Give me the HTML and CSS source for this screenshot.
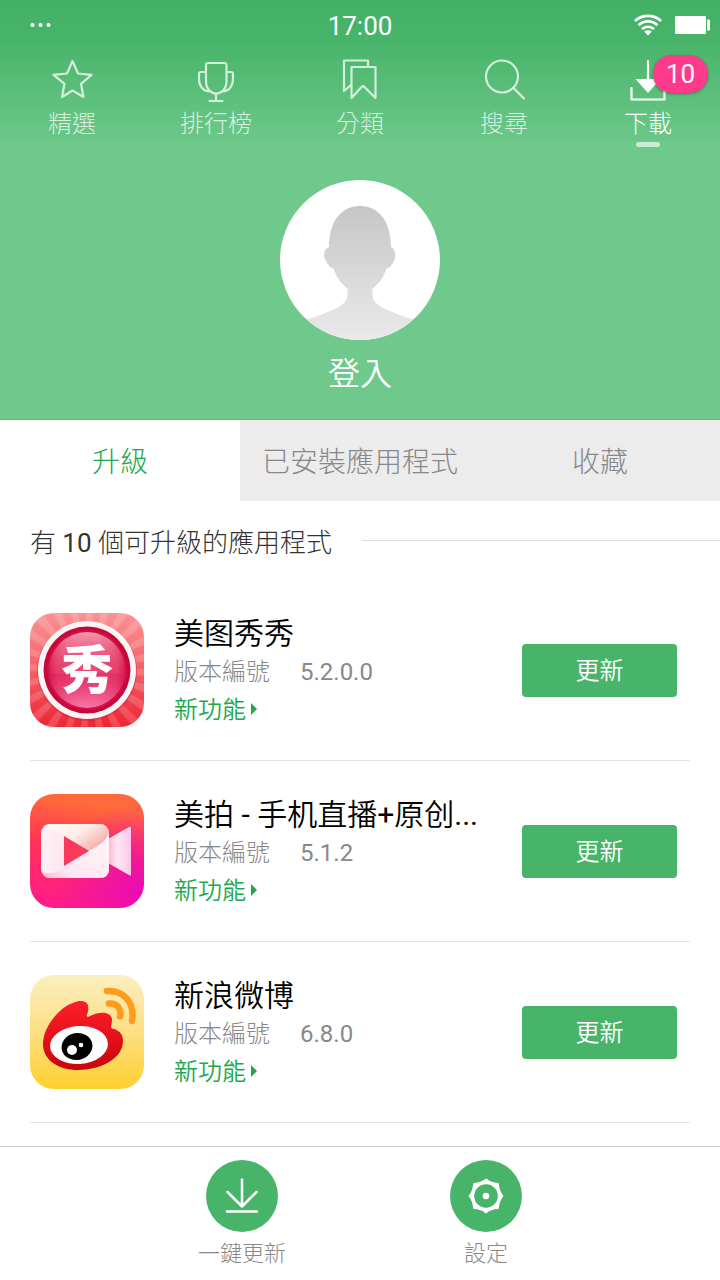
FILE: index.html
```html
<!DOCTYPE html>
<html lang="zh-Hant">
<head>
<meta charset="utf-8">
<meta name="viewport" content="width=device-width, initial-scale=1">
<title>下載</title>
<link rel="stylesheet" href="styles.css">
</head>
<body>
<div class="app">
  <header class="top">
    <div class="status">
      <svg class="status-dots" width="22" height="6" viewBox="0 0 22 6" fill="#fff"><circle cx="2.500" cy="3" r="2.100"/><circle cx="10.500" cy="3" r="2.100"/><circle cx="18.500" cy="3" r="2.100"/></svg>
      <time class="clock">17:00</time>
      <div class="status-right">
        <svg width="28" height="22" viewBox="0 0 28 22" fill="none" stroke="#fff" stroke-width="2.600"><path d="M1 7a19 19 0 0 1 26 0M4.600 11.200a13.500 13.500 0 0 1 18.800 0M8 15.200a8.500 8.500 0 0 1 12 0"/><path d="M10.200 17.500q3.800-2.600 7.600 0L14 21.500z" fill="#fff" stroke="none"/></svg>
        <svg width="35" height="18" viewBox="0 0 35 18" fill="#fff"><rect width="31" height="18" rx="1"/><rect x="32" y="3.500" width="3" height="11" rx="1"/></svg>
      </div>
    </div>
    <nav class="nav">
      <a class="nav-item" href="#">
        <svg width="44" height="44" viewBox="0 0 44 44"><path d="M22.500 4l5.500 12.500 13.500 1.300-10.500 9L33.500 40 22.500 33.500 12 40l2.500-13.200L3.500 17.800l13.500-1.300z"/></svg>
        <span>精選</span>
      </a>
      <a class="nav-item" href="#">
        <svg width="44" height="44" viewBox="0 0 44 44"><path d="M12 8q0-2 2-2h16.500q2 0 2 2v16c0 8-5 12.500-10.300 12.500S12 32 12 24zM12 15H7q-2 0-2 2v5c0 7 4 12 9.500 12.500M32.500 15H37q2 0 2 2v5c0 7-4 12-9.500 12.500M22 37v7M15.500 44h13"/></svg>
        <span>排行榜</span>
      </a>
      <a class="nav-item" href="#">
        <svg width="44" height="44" viewBox="0 0 44 44"><path d="M13.500 10h24v31L26.500 30q-1.500-1.500-3 0l-10 11zM13.500 27.500L6 34V3.500h24V10"/></svg>
        <span>分類</span>
      </a>
      <a class="nav-item" href="#">
        <svg width="44" height="44" viewBox="0 0 44 44"><circle cx="20" cy="19.500" r="16"/><path d="M31.500 31l10.500 10.500"/></svg>
        <span>搜尋</span>
      </a>
      <a class="nav-item active" href="#" aria-current="page">
        <svg width="44" height="44" viewBox="0 0 44 44"><path d="M22 4v20"/><path class="solid" d="M9.500 22h25L22 36z"/><path d="M5.500 31v11.500h33V31"/></svg>
        <span>下載</span>
        <b class="badge">10</b>
      </a>
    </nav>
    <a class="profile" href="#">
      <svg class="avatar" width="160" height="160" viewBox="0 0 160 160">
        <defs>
          <linearGradient id="person" x1="0" y1="0" x2="0" y2="1"><stop offset="0" stop-color="#c6c6c6"/><stop offset="1" stop-color="#ebebeb"/></linearGradient>
          <clipPath id="round"><circle cx="80" cy="80" r="80"/></clipPath>
        </defs>
        <circle cx="80" cy="80" r="80" fill="#fff"/>
        <path clip-path="url(#round)" fill="url(#person)" d="M80 26c20 0 31 17 31 41 5 3 5 9 3 14-2 4-4 7-8 8-2 8-8 16-14 20 1 6 0 10 4 14 11 9 25 12 38 17v24H26v-24c13-5 27-8 38-17 4-4 3-8 4-14-6-4-12-12-14-20-4-1-6-4-8-8-3-5-3-11 3-14 0-24 11-41 31-41z"/>
      </svg>
      <span>登入</span>
    </a>
  </header>

  <div class="tabs" role="tablist">
    <button class="tab selected" role="tab" aria-selected="true">升級</button>
    <button class="tab" role="tab" aria-selected="false">已安裝應用程式</button>
    <button class="tab" role="tab" aria-selected="false">收藏</button>
  </div>

  <main class="content">
    <h1 class="heading"><span>有 <span class="latin">10</span> 個可升級的應用程式</span></h1>
    <ul class="list">
      <li class="row">
        <svg class="app-icon meitu" viewBox="0 0 114 114">
          <defs>
            <radialGradient id="disc" cx=".5" cy=".5" r=".5"><stop offset="0" stop-color="#ee4a7c"/><stop offset=".75" stop-color="#e63a68"/><stop offset="1" stop-color="#c9063c"/></radialGradient>
            <linearGradient id="shine" x1="0" y1="0" x2="0" y2="1"><stop offset="0" stop-color="#f7b0bf" stop-opacity=".85"/><stop offset=".5" stop-color="#ee5a80" stop-opacity=".1"/><stop offset=".56" stop-color="#e11a58" stop-opacity=".4"/><stop offset="1" stop-color="#ff8fc0" stop-opacity=".8"/></linearGradient>
          </defs>
          <circle cx="57" cy="58" r="50" fill="#c92038" opacity=".4"/>
          <circle cx="57" cy="57" r="49" fill="#f8f5f5"/>
          <circle cx="57" cy="57" r="43.500" fill="#c9063c"/>
          <circle cx="57" cy="57" r="41" fill="url(#disc)"/>
          <circle cx="57" cy="57" r="38" fill="url(#shine)"/>
          <text class="logo-char" x="57" y="76" text-anchor="middle">秀</text>
        </svg>
        <div class="info">
          <h2>美图秀秀</h2>
          <p><span>版本編號</span><span class="latin">5.2.0.0</span></p>
          <a class="news" href="#">新功能<svg width="6" height="12" viewBox="0 0 6 12"><path d="M0 0l6 6-6 6z" fill="currentColor"/></svg></a>
        </div>
        <button class="update">更新</button>
      </li>
      <li class="row">
        <svg class="app-icon meipai" viewBox="0 0 114 114">
          <defs>
            <linearGradient id="lens" x1="0" y1="0" x2="1" y2="0"><stop offset="0" stop-color="#f9b8cc"/><stop offset=".4" stop-color="#ffe6f3"/><stop offset="1" stop-color="#fbc5ec"/></linearGradient>
            <linearGradient id="fold" x1="0" y1="0" x2="1" y2=".6"><stop offset="0" stop-color="#fff"/><stop offset=".55" stop-color="#ffece9"/><stop offset="1" stop-color="#f5b0a8"/></linearGradient>
            <linearGradient id="side" x1="0" y1="0" x2="1" y2="0"><stop offset="0" stop-color="#fff0f6"/><stop offset="1" stop-color="#fbd3e4"/></linearGradient>
            <linearGradient id="base" x1="0" y1="1" x2="1" y2="0"><stop offset="0" stop-color="#f5b5cd"/><stop offset=".25" stop-color="#ffe5f3"/><stop offset="1" stop-color="#fff5f8"/></linearGradient>
          </defs>
          <path d="M78 45l21-12q2-1 2 1v46q0 3-2 1L78 69z" fill="url(#lens)"/>
          <rect x="11" y="30" width="68" height="54" rx="9" fill="url(#side)"/>
          <path d="M14 32q3-2 6-2h50q8 0 8 9-2 10-20 18L34 42Q23 35 14 34z" fill="url(#fold)"/>
          <path d="M12 78q12 4 23-5l24-16q18-9 20-17v35q0 9-9 9H20q-6 0-8-6z" fill="url(#base)"/>
          <path d="M34 42l25 15-25 15z" fill="#f83a5c"/>
        </svg>
        <div class="info">
          <h2>美拍<span class="latin"> - </span>手机直播<span class="latin">+</span>原创<span class="latin">...</span></h2>
          <p><span>版本編號</span><span class="latin">5.1.2</span></p>
          <a class="news" href="#">新功能<svg width="6" height="12" viewBox="0 0 6 12"><path d="M0 0l6 6-6 6z" fill="currentColor"/></svg></a>
        </div>
        <button class="update">更新</button>
      </li>
      <li class="row">
        <svg class="app-icon weibo" viewBox="0 0 114 114">
          <defs><linearGradient id="red" x1="0" y1="0" x2="0" y2="1"><stop offset="0" stop-color="#ff1f2c"/><stop offset="1" stop-color="#c9050b"/></linearGradient></defs>
          <path fill="url(#red)" d="M47 26.500c9-2 14 3 10 13q-1 3 2 2c9-5 22-6 23 3q0 3-1 7 0 2 3 2.500c6 2 9 6 9 12 0 18-23 29-45 29-20 0-35-10-35-26 0-18 18-39 34-42.500z"/>
          <ellipse cx="49" cy="70" rx="29" ry="19" fill="#fff" transform="rotate(-4 49 70)"/>
          <ellipse cx="47" cy="71.500" rx="15.500" ry="13.500" fill="#000" transform="rotate(-12 47 71.500)"/>
          <circle cx="42" cy="75" r="5" fill="#fff"/><circle cx="51" cy="70" r="2.300" fill="#fff"/>
          <path d="M77 16c18-1 28 13 25 30M79 28.500c8-1 13 6 11 13" fill="none" stroke="#ff9b1d" stroke-width="6.500" stroke-linecap="round"/>
        </svg>
        <div class="info">
          <h2>新浪微博</h2>
          <p><span>版本編號</span><span class="latin">6.8.0</span></p>
          <a class="news" href="#">新功能<svg width="6" height="12" viewBox="0 0 6 12"><path d="M0 0l6 6-6 6z" fill="currentColor"/></svg></a>
        </div>
        <button class="update">更新</button>
      </li>
    </ul>
  </main>

  <footer class="bottom">
    <button class="action">
      <svg width="72" height="72" viewBox="0 0 72 72"><circle cx="36" cy="36" r="36" fill="#48b46a"/><path d="M36 19.500v27M21.500 32L36 46.500 50.500 32M21 51.500h30" fill="none" stroke="#fff" stroke-width="2.500" stroke-linecap="round" stroke-linejoin="round"/></svg>
      <span>一鍵更新</span>
    </button>
    <button class="action">
      <svg width="72" height="72" viewBox="0 0 72 72"><circle cx="36" cy="36" r="36" fill="#48b46a"/><g transform="translate(36 36)"><path d="M0-16.500Q4.900-12.600 12-12.300 12.600-4.900 16.500 0 12.600 4.900 12 12.300 4.900 12.600 0 16.500-4.900 12.600-12 12.300-12.600 4.900-16.500 0-12.600-4.900-12-12.300-4.900-12.600 0-16.500z" fill="#fff" stroke="#fff" stroke-width="1.600" stroke-linejoin="round"/><circle r="11.800" fill="#48b46a"/><circle r="3.300" fill="#fff"/></g></svg>
      <span>設定</span>
    </button>
  </footer>
</div>
</body>
</html>
```
FILE: styles.css
```css
* { box-sizing: border-box; }

body {
  margin: 0;
  background: #fff;
  font-family: Roboto, "Noto Sans CJK TC", sans-serif;
  font-weight: 300;
}

a { color: inherit; text-decoration: none; }
svg { display: block; flex: none; }

button {
  border: 0;
  padding: 0;
  background: none;
  font: inherit;
  color: inherit;
}

.latin { font-weight: 400; }

.app {
  height: 100vh;
  display: flex;
  flex-direction: column;
}

.top {
  flex: none;
  color: #fff;
  background: linear-gradient(#42b065, #48b46a 40px, #6fc98c 150px);
  border-bottom: 1px solid #58bd78;
}

.status {
  display: grid;
  grid-template-columns: 1fr auto 1fr;
  align-items: center;
  height: 52px;
  padding: 0 10px 2px 30px;
}

.clock {
  margin-right: 20px;
  padding-top: 2px;
  font-size: 26px;
  font-weight: 400;
}

.status-right {
  display: flex;
  justify-content: flex-end;
  align-items: center;
  gap: 13px;
}

.nav { display: grid; grid-template-columns: repeat(5, 1fr); }

.nav-item {
  position: relative;
  display: flex;
  flex-direction: column;
  align-items: center;
  gap: 5px;
  height: 96px;
  padding-top: 5px;
  font-size: 24px;
  line-height: 36px;
  color: rgba(255, 255, 255, .75);
}

.nav-item svg {
  overflow: visible;
  fill: none;
  stroke: currentColor;
  stroke-width: 2.2px;
  stroke-linejoin: round;
  stroke-linecap: round;
}

.nav-item.active { color: #fff; }
.nav-item .solid { fill: currentColor; stroke: none; }

.nav-item.active::after {
  content: "";
  flex: none;
  width: 24px;
  height: 5px;
  margin-top: -5px;
  border-radius: 3px;
  background: rgba(255, 255, 255, .65);
}

.badge {
  position: absolute;
  top: 3px;
  right: 12px;
  width: 55px;
  height: 38px;
  border-radius: 19px;
  background: #ff3a8c;
  box-shadow: 0 1px 3px rgba(0, 0, 0, .35);
  font-size: 26px;
  font-weight: 400;
  line-height: 38px;
  text-align: center;
}

.profile {
  display: flex;
  flex-direction: column;
  align-items: center;
  gap: 10px;
  padding: 32px 0 21px;
  font-size: 32px;
  font-weight: 350;
  line-height: 48px;
}

.tabs {
  flex: none;
  display: grid;
  grid-template-columns: repeat(3, 1fr);
  height: 81px;
  background: #ececec;
  font-size: 28px;
  color: #888;
}

.tab { padding-bottom: 2px; }
.tab.selected { background: #fff; color: #22a84c; }

.content { flex: 1; min-height: 0; overflow: hidden; }

.heading {
  display: flex;
  align-items: center;
  gap: 30px;
  height: 79px;
  margin: 0;
  padding-left: 30px;
  font-size: 26px;
  font-weight: 300;
  color: #333;
}

.heading::after { content: ""; flex: 1; height: 1px; background: #ddd; }

.list { margin: 0; padding: 0 30px; list-style: none; }

.row {
  display: flex;
  align-items: center;
  gap: 30px;
  height: 181px;
  border-bottom: 1px solid #e2e2e2;
}

.app-icon { width: 114px; height: 114px; border-radius: 24px; }

.meitu {
  background:
    repeating-conic-gradient(rgba(255, 255, 255, .16) 0 5deg, rgba(255, 255, 255, 0) 7deg 13deg, rgba(255, 255, 255, .16) 15deg),
    linear-gradient(#fa9394, #f2555d 60%, #ee2433);
}

.meipai {
  background:
    radial-gradient(circle at 95% 85%, #ec0bb5, rgba(236, 11, 181, 0) 60%),
    linear-gradient(10deg, #ff1a8e, #ff3355 50%, #ff6a3a 85%);
}

.weibo { background: linear-gradient(#fbefc0, #fde08a 45%, #ffd02f); }

.logo-char {
  font-family: "Noto Sans CJK SC", sans-serif;
  font-size: 52px;
  font-weight: 900;
  fill: #fff;
}

.info { flex: 1; min-width: 0; padding-top: 4px; }

.info h2 {
  margin: 0;
  font-size: 30px;
  line-height: 40px;
  font-weight: 350;
  color: #000;
  white-space: nowrap;
}

.info p {
  display: flex;
  gap: 30px;
  margin: 0;
  font-size: 24px;
  line-height: 36px;
  color: #888;
}

.news {
  display: inline-flex;
  align-items: center;
  gap: 5px;
  font-size: 24px;
  font-weight: 350;
  line-height: 40px;
  color: #22a84c;
}

.news svg { margin-bottom: 2px; }

.update {
  flex: none;
  width: 155px;
  height: 53px;
  margin-right: 13px;
  padding-bottom: 4px;
  border-radius: 4px;
  background: #48b46a;
  color: #fff;
  font-size: 24px;
  font-weight: 350;
}

.bottom {
  flex: none;
  display: flex;
  justify-content: center;
  height: 134px;
  padding-left: 8px;
  border-top: 1px solid #c8c8c8;
  background: #fff;
}

.action {
  display: flex;
  flex-direction: column;
  align-items: center;
  gap: 6px;
  width: 244px;
  padding-top: 13px;
  font-size: 22px;
  line-height: 32px;
  color: #888;
}
```
